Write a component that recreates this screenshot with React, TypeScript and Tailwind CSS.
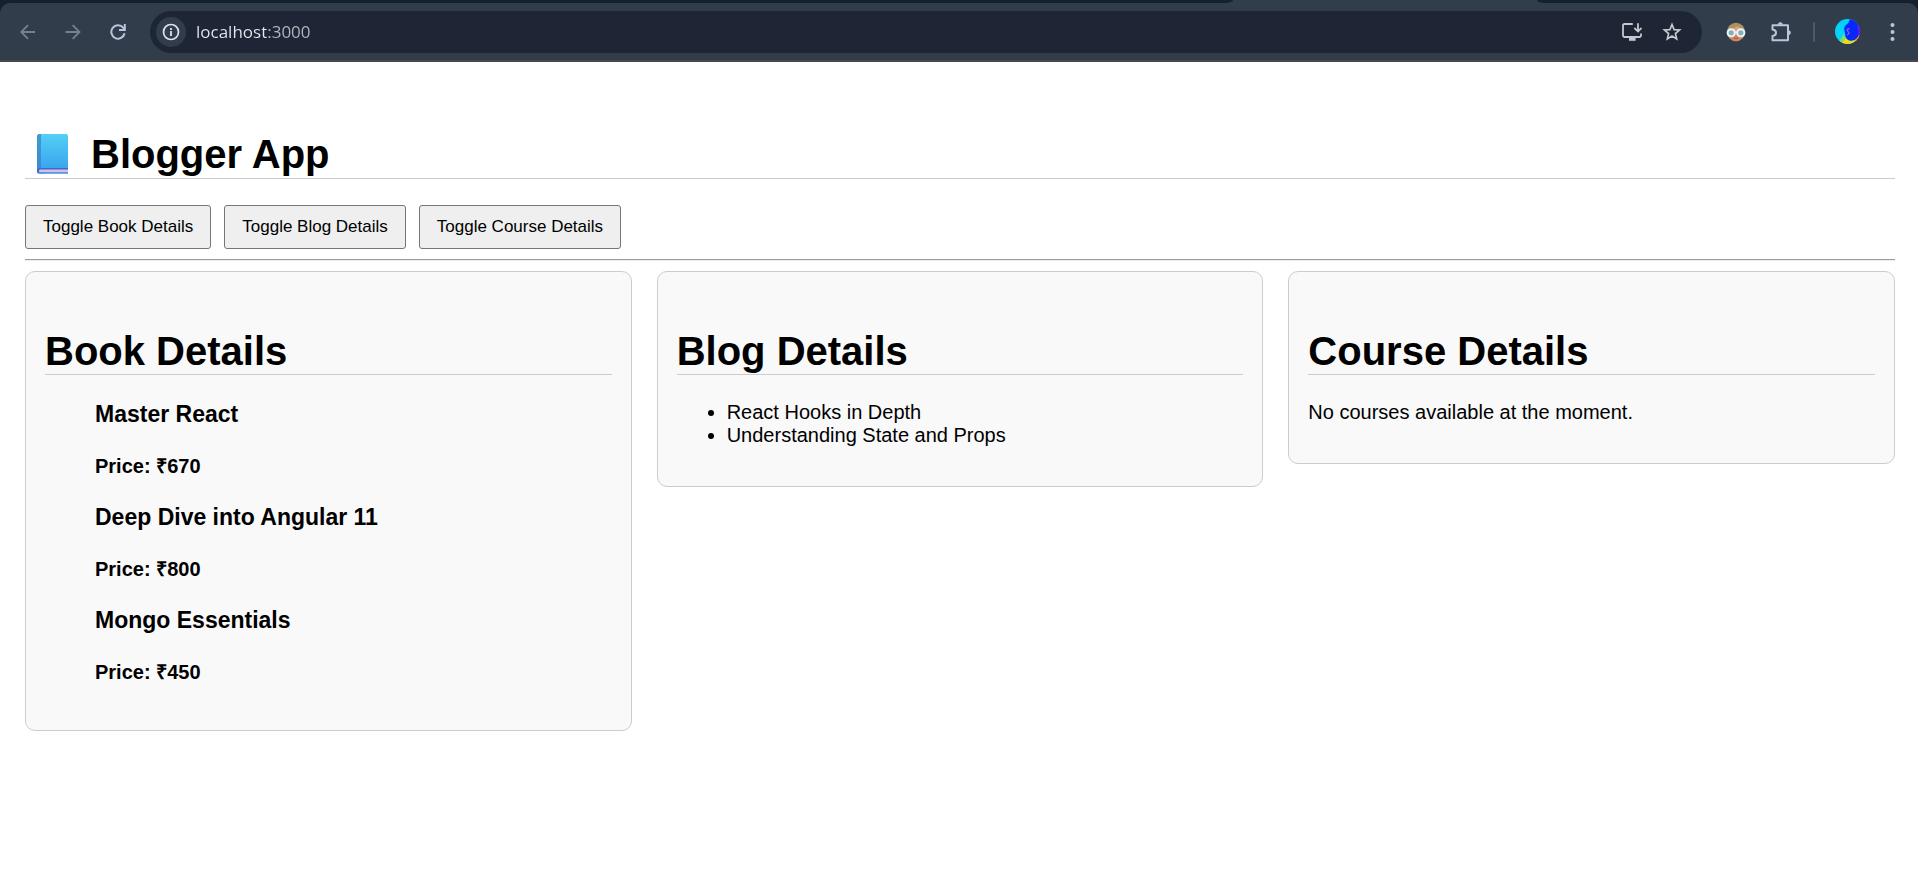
import { useState } from "react";
import type { ReactNode } from "react";

const books = [
  { id: 101, name: "Master React", price: 670 },
  { id: 102, name: "Deep Dive into Angular 11", price: 800 },
  { id: 103, name: "Mongo Essentials", price: 450 },
];

const blogs = ["React Hooks in Depth", "Understanding State and Props"];

function ToolButton({ label, className, children }: { label: string; className: string; children: ReactNode }) {
  return (
    <button type="button" aria-label={label} className={`flex h-10 shrink-0 items-center justify-center ${className}`}>
      {children}
    </button>
  );
}

function BrowserBar() {
  return (
    <header className="bg-[#14202d]">
      <div className="flex h-[3px] gap-[304px] bg-[#323d4c]">
        <div className="flex-1 rounded-br-[8px_3px] bg-[#14202d]" />
        <div className="w-[381px] rounded-bl-[8px_3px] bg-[#14202d]" />
      </div>
      <div className="flex h-[59px] items-center rounded-t-[10px] border-b-2 border-[#47494f] bg-[#323d4c] pr-[3px] pl-[5px]">
        <ToolButton label="Back" className="w-[45px] text-[#76808f]">
          <svg width="16" height="16" viewBox="0 0 16 16" fill="none" stroke="currentColor" strokeWidth="1.8">
            <path d="M15 8H1.400M8 1.200 1.200 8l6.800 6.800" />
          </svg>
        </ToolButton>
        <ToolButton label="Forward" className="w-[45px] text-[#76808f]">
          <svg width="16" height="16" viewBox="0 0 16 16" fill="none" stroke="currentColor" strokeWidth="1.8">
            <path d="M.5 8h13.900M7.700 1.200 14.500 8l-6.800 6.800" />
          </svg>
        </ToolButton>
        <ToolButton label="Reload" className="w-[45px] text-[#b9c6dc]">
          <svg width="16" height="16" viewBox="0 0 16 16" fill="none" stroke="currentColor" strokeWidth="2">
            <path d="M14.600 9.300A6.700 6.700 0 1 1 13.200 3.700L14.600 5.400" />
            <path d="M14.800 0v6.100H9" />
          </svg>
        </ToolButton>
        <div className="ml-[10px] flex h-[42px] min-w-0 flex-1 items-center rounded-full bg-[#1e2636] pr-[10px] pl-[6px]">
          <button
            type="button"
            aria-label="View site information"
            className="flex size-[30px] shrink-0 items-center justify-center rounded-full bg-[#323d4c]"
          >
            <svg width="18" height="18" viewBox="0 0 18 18" fill="none" stroke="#dfe3ee">
              <circle cx="9" cy="9" r="7.500" strokeWidth="1.700" />
              <path d="M9 8v5M9 5v1.900" strokeWidth="1.800" />
            </svg>
          </button>
          <input
            aria-label="Address"
            defaultValue="localhost:3000"
            className="ml-[10px] h-8 min-w-0 flex-1 bg-[linear-gradient(90deg,#e6e9f0_70px,#b4b8c0_70px)] bg-clip-text font-['Open_Sans',sans-serif] text-[17px] text-transparent caret-white outline-none"
          />
          <ToolButton label="Install app" className="w-10">
            <svg width="20" height="18" viewBox="0 0 20 18" fill="none" stroke="#c5c8ce" strokeWidth="1.800">
              <path d="M10.800 1H2.400Q1 1 1 2.400v10.200Q1 14 2.400 14h15.200q1.400 0 1.400-1.400V10.500" />
              <path d="M7 16.200h6.600" strokeWidth="3.200" />
              <path d="M16 .2v8M12.400 5 16 8.600 19.600 5" />
            </svg>
          </ToolButton>
          <ToolButton label="Bookmark this tab" className="w-10">
            <svg width="20" height="20" viewBox="0 0 20 20" fill="none" stroke="#c5c8ce" strokeWidth="1.700">
              <path d="m10 2.500 2.100 5.100 5.500.4-4.200 3.600 1.300 5.400L10 14.100 5.300 17l1.300-5.400L2.400 8l5.500-.4z" />
            </svg>
          </ToolButton>
        </div>
        <ToolButton label="Extension" className="ml-[11px] w-[45px]">
          <svg width="20" height="20" viewBox="0 0 20 20">
            <circle cx="10" cy="10" r="9.200" fill="#b08f62" />
            <path d="M2 11Q3 7.500 7 6.500L12 4q2 3 5.500 4.500l.5 3.500-2.500 4.500Q10 20.500 4.500 16.500z" fill="#dca37c" />
            <path d="M3.500 14.500Q6 19.200 10 19.200t6.500-4.700L10 13z" fill="#d08660" />
            <circle cx="5.200" cy="10.800" r="3.600" fill="#7fb2bd" stroke="#f2f5f6" strokeWidth="1.900" />
            <circle cx="14.800" cy="10.800" r="3.600" fill="#7fb2bd" stroke="#f2f5f6" strokeWidth="1.900" />
            <path d="M8.500 10.200h3" stroke="#f2f5f6" strokeWidth="1.600" />
            <path d="M8 16.200h4" stroke="#b3543c" strokeWidth="1" />
          </svg>
        </ToolButton>
        <ToolButton label="Extensions" className="w-[45px]">
          <svg width="22" height="22" viewBox="0 0 22 22">
            <path
              d="M2.500 4.200h15.500v15H2.500v-4.300q3.500-.4 3.500-3.200T2.500 8.500z"
              fill="none"
              stroke="#b9c6dc"
              strokeWidth="2"
              strokeLinejoin="round"
            />
            <path d="M7.800 3.800a2.500 2.500 0 0 1 5 0zM18.300 9.200a2.500 2.500 0 0 1 0 5z" fill="#b9c6dc" />
          </svg>
        </ToolButton>
        <div className="mx-[10px] h-5 w-[2px] shrink-0 rounded-full bg-[#4d5868]" />
        <ToolButton label="Profile" className="w-[45px]">
          <svg width="25" height="25" viewBox="0 0 25 25">
            <defs>
              <clipPath id="avatar">
                <circle cx="12.500" cy="12.500" r="12.500" />
              </clipPath>
            </defs>
            <g clipPath="url(#avatar)">
              <rect width="25" height="25" fill="#05d3f5" />
              <path d="M0 7q4-1 6-3t3-4H0z" fill="#12b8f8" />
              <path d="M15 0q-1 4-4 6t-1 8q0 6 5 8l10-2V0z" fill="#0528ff" />
              <path d="M22 7q2 5 1 10l2 1V7z" fill="#7a12f0" />
              <path d="M8.500 15.500q2 6 8 6.500 5-.5 8-6v9H4q4-4 4.500-9.500z" fill="#f5d90a" />
              <path d="M4 22q3-3 4.500-7l2 4-3 5z" fill="#7fd97a" />
              <path d="M20 20.500q2-1 4-4.500l.5 2-3 5z" fill="#f07a1a" />
              <path d="M14.500 9.500q-4 1-1.500 3t-1 3.500" fill="none" stroke="#8a5af0" strokeWidth="1.400" />
            </g>
          </svg>
        </ToolButton>
        <ToolButton label="Menu" className="w-[45px]">
          <svg width="5" height="20" viewBox="0 0 5 20" fill="#b9c6dc">
            <circle cx="2.500" cy="3" r="2" />
            <circle cx="2.500" cy="10" r="2" />
            <circle cx="2.500" cy="17" r="2" />
          </svg>
        </ToolButton>
      </div>
    </header>
  );
}

function BookIcon() {
  return (
    <svg width="32" height="40" viewBox="0 0 32 40" role="img" aria-label="Blue book" className="mx-3 shrink-0">
      <defs>
        <linearGradient id="cover" x1="0" y1="0" x2="0" y2="1">
          <stop offset="0" stopColor="#54d0f5" />
          <stop offset="1" stopColor="#3aa5ee" />
        </linearGradient>
        <linearGradient id="spine" x1="0" y1="0" x2="0" y2="1">
          <stop offset="0" stopColor="#3d9ccb" />
          <stop offset="1" stopColor="#3f87d6" />
        </linearGradient>
      </defs>
      <path d="M0 3q0-3 3-3h5v39.500H2q-2 0-2-2z" fill="url(#spine)" />
      <path d="M0 34h31v5.500H2q-2 0-2-2z" fill="#4068cc" />
      <path d="M2.500 35.500H31V38H2.500q-1.200-1.200 0-2.500z" fill="#d5bfe8" />
      <path d="M4 0h25q2 0 2 2v32H4z" fill="url(#cover)" />
      <path d="M0 3q0-3 3-3h1v34H1.500L0 35.500z" fill="url(#spine)" />
      <path d="M1 38.200h30v.3q0 1-1 1H2q-1 0-1-1.300z" fill="#5fa6ec" />
    </svg>
  );
}

function ToggleButton({ children, pressed, onClick }: { children: ReactNode; pressed: boolean; onClick: () => void }) {
  return (
    <button
      type="button"
      aria-pressed={pressed}
      onClick={onClick}
      className="h-11 rounded-[3px] border border-[#767676] bg-[#efefef] px-[17px] text-[17px] leading-5"
    >
      {children}
    </button>
  );
}

function Card({ title, children }: { title: string; children: ReactNode }) {
  return (
    <section className="min-w-0 flex-1 rounded-[10px] border border-[#ccc] bg-[#f9f9f9] px-[19px] pt-14 pb-[19px]">
      <h2 className="mb-[26px] border-b border-[#ccc] text-[40px] leading-[46px] font-bold">{title}</h2>
      {children}
    </section>
  );
}

export default function App() {
  const [showBooks, setShowBooks] = useState(true);
  const [showBlogs, setShowBlogs] = useState(true);
  const [showCourses, setShowCourses] = useState(true);

  return (
    <div className="min-h-screen bg-white font-['Liberation_Sans',Arial,sans-serif] text-black">
      <BrowserBar />
      <main className="pt-[69px] pr-[23px] pl-[25px]">
        <h1 className="flex items-center border-b border-[#ccc] pb-px text-[40px] leading-[46px] font-bold">
          <BookIcon />
          <span className="pl-[10px]">Blogger App</span>
        </h1>
        <div className="mt-[26px] flex gap-[13px]">
          <ToggleButton pressed={showBooks} onClick={() => setShowBooks(!showBooks)}>
            Toggle Book Details
          </ToggleButton>
          <ToggleButton pressed={showBlogs} onClick={() => setShowBlogs(!showBlogs)}>
            Toggle Blog Details
          </ToggleButton>
          <ToggleButton pressed={showCourses} onClick={() => setShowCourses(!showCourses)}>
            Toggle Course Details
          </ToggleButton>
        </div>
        <hr className="my-[10px] border-t border-b border-t-[#9a9a9a] border-b-[#eee]" />
        <div className="flex items-start gap-[25px]">
          {showBooks && (
            <Card title="Book Details">
              <div className="pb-[27px] pl-[50px]">
                {books.map((book) => (
                  <article key={book.id} className="not-last:mb-[26px]">
                    <h3 className="text-[23px] leading-[27px] font-bold">{book.name}</h3>
                    <h4 className="mt-[27px] text-xl leading-[23px] font-bold">Price: ₹{book.price}</h4>
                  </article>
                ))}
              </div>
            </Card>
          )}
          {showBlogs && (
            <Card title="Blog Details">
              <ul className="mb-5 list-disc pl-[50px] text-xl leading-[23px]">
                {blogs.map((blog) => (
                  <li key={blog}>{blog}</li>
                ))}
              </ul>
            </Card>
          )}
          {showCourses && (
            <Card title="Course Details">
              <p className="mb-5 text-xl leading-[23px]">No courses available at the moment.</p>
            </Card>
          )}
        </div>
      </main>
    </div>
  );
}
